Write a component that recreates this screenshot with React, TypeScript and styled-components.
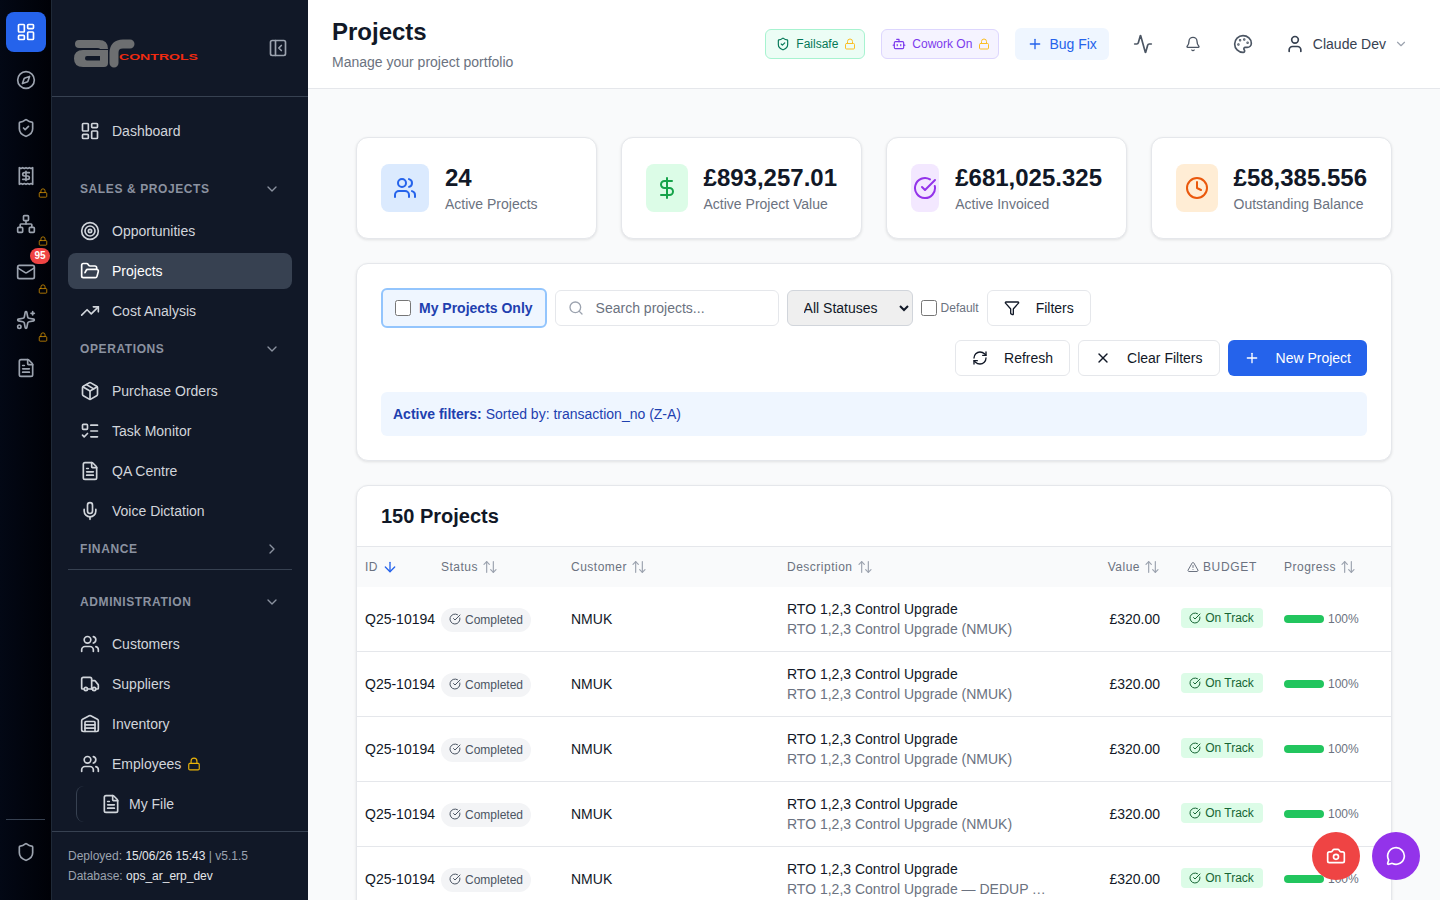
import React from 'react';
import styled, { createGlobalStyle } from 'styled-components';
import {
  Activity,
  ArrowDown,
  ArrowUpDown,
  Bell,
  Bot,
  Camera,
  ChevronDown,
  ChevronRight,
  CircleCheckBig,
  Clock,
  Compass,
  DollarSign,
  FileText,
  Filter,
  FolderOpen,
  LayoutDashboard,
  ListTodo,
  Lock,
  LucideIcon,
  Mail,
  MessageCircle,
  Mic,
  Network,
  Package,
  Palette,
  PanelLeftClose,
  Plus,
  Receipt,
  RefreshCw,
  Search,
  Shield,
  ShieldCheck,
  Sparkles,
  Target,
  TrendingUp,
  TriangleAlert,
  Truck,
  User,
  Users,
  Warehouse,
  X,
} from 'lucide-react';

const GlobalStyle = createGlobalStyle`
  * { box-sizing: border-box; }
  html, body { margin: 0; height: 100%; overflow: hidden; }
  body { font-family: "Liberation Sans", Arial, sans-serif; color: #111827; }
`;

const railItems: { icon: LucideIcon; locked?: boolean; badge?: string; active?: boolean }[] = [
  { icon: LayoutDashboard, active: true },
  { icon: Compass },
  { icon: ShieldCheck },
  { icon: Receipt, locked: true },
  { icon: Network, locked: true },
  { icon: Mail, locked: true, badge: '95' },
  { icon: Sparkles, locked: true },
  { icon: FileText },
];

const stats = [
  { icon: Users, value: '24', label: 'Active Projects', bg: '#dbeafe', fg: '#2563eb' },
  { icon: DollarSign, value: '£893,257.01', label: 'Active Project Value', bg: '#dcfce7', fg: '#16a34a' },
  { icon: CircleCheckBig, value: '£681,025.325', label: 'Active Invoiced', bg: '#f3e8ff', fg: '#9333ea' },
  { icon: Clock, value: '£58,385.556', label: 'Outstanding Balance', bg: '#ffedd5', fg: '#ea580c' },
];

const projectRows = [
  'RTO 1,2,3 Control Upgrade (NMUK)',
  'RTO 1,2,3 Control Upgrade (NMUK)',
  'RTO 1,2,3 Control Upgrade (NMUK)',
  'RTO 1,2,3 Control Upgrade (NMUK)',
  'RTO 1,2,3 Control Upgrade — DEDUP TEST PROJECT',
];

const Logo = () => (
  <LogoSvg viewBox="0 -12 126 40" width={126} height={40}>
    <g fill="#6d6f71">
      <path d="M5 0 H25 Q34 0 34 9 H26 Q26 8 23 8 H5 Q1 8 1 4 Q1 0 5 0 Z" />
      <path
        fillRule="evenodd"
        d="M34 10 H9 Q0 10 0 18.5 Q0 27 9 27 H30 Q34 27 34 23 Z M26 16 H13 Q11 16 11 18.2 Q11 20.5 13 20.5 H26 Z"
      />
    </g>
    <path d="M40 23 V13 Q40 4 49 4 H56" fill="none" stroke="#6d6f71" strokeWidth={9} strokeLinecap="round" />
    <LogoText x={45} y={20} textLength={79} lengthAdjust="spacingAndGlyphs">
      CONTROLS
    </LogoText>
  </LogoSvg>
);

const NavLink = ({ icon: Icon, label, active, locked }: { icon: LucideIcon; label: string; active?: boolean; locked?: boolean }) => (
  <NavItem $active={active}>
    <Icon size={20} />
    <span>{label}</span>
    {locked && <Lock size={14} color="#eab308" />}
  </NavItem>
);

const SortHead = ({ label }: { label: string }) => (
  <HeadInner>
    {label}
    <ArrowUpDown size={16} color="#9ca3af" strokeWidth={1.75} />
  </HeadInner>
);

const App = () => {
  return (
    <>
      <GlobalStyle />
      <Shell>
        <Rail>
          {railItems.map(({ icon: Icon, locked, badge, active }, index) => (
            <RailButton key={index} $active={active}>
              <Icon size={20} />
              {badge && <RailBadge>{badge}</RailBadge>}
              {locked && (
                <RailLock>
                  <Lock size={10} />
                </RailLock>
              )}
            </RailButton>
          ))}
          <RailBottom>
            <RailButton>
              <Shield size={20} />
            </RailButton>
          </RailBottom>
        </Rail>

        <Sidebar>
          <SidebarTop>
            <Logo />
            <PanelLeftClose size={20} color="#9ca3af" />
          </SidebarTop>
          <Nav>
            <NavLink icon={LayoutDashboard} label="Dashboard" />
            <SectionHead $top={28}>
              SALES &amp; PROJECTS
              <ChevronDown size={16} />
            </SectionHead>
            <NavGroup>
              <NavLink icon={Target} label="Opportunities" />
              <NavLink icon={FolderOpen} label="Projects" active />
              <NavLink icon={TrendingUp} label="Cost Analysis" />
            </NavGroup>
            <SectionHead $top={8}>
              OPERATIONS
              <ChevronDown size={16} />
            </SectionHead>
            <NavGroup>
              <NavLink icon={Package} label="Purchase Orders" />
              <NavLink icon={ListTodo} label="Task Monitor" />
              <NavLink icon={FileText} label="QA Centre" />
              <NavLink icon={Mic} label="Voice Dictation" />
            </NavGroup>
            <SectionHead $top={8}>
              FINANCE
              <ChevronRight size={16} />
            </SectionHead>
            <NavDivider />
            <SectionHead $top={0}>
              ADMINISTRATION
              <ChevronDown size={16} />
            </SectionHead>
            <NavGroup>
              <NavLink icon={Users} label="Customers" />
              <NavLink icon={Truck} label="Suppliers" />
              <NavLink icon={Warehouse} label="Inventory" />
              <NavLink icon={Users} label="Employees" locked />
              <SubItem>
                <FileText size={20} />
                My File
              </SubItem>
            </NavGroup>
          </Nav>
          <SidebarFooter>
            <div>
              Deployed: <FooterValue>15/06/26 15:43</FooterValue> | v5.1.5
            </div>
            <div>
              Database: <FooterValue>ops_ar_erp_dev</FooterValue>
            </div>
          </SidebarFooter>
        </Sidebar>

        <Main>
          <Header>
            <div>
              <PageTitle>Projects</PageTitle>
              <PageSub>Manage your project portfolio</PageSub>
            </div>
            <HeaderActions>
              <Chip $bg="#ecfdf5" $border="#a7f3d0" $color="#047857">
                <ShieldCheck size={14} />
                Failsafe
                <Lock size={12} color="#fbbf24" />
              </Chip>
              <Chip $bg="#f5f3ff" $border="#ddd6fe" $color="#7c3aed">
                <Bot size={14} />
                Cowork On
                <Lock size={12} color="#fbbf24" />
              </Chip>
              <BugButton>
                <Plus size={16} />
                Bug Fix
              </BugButton>
              <IconGroup>
                <IconButton>
                  <Activity size={20} />
                </IconButton>
                <IconButton>
                  <Bell size={16} />
                </IconButton>
                <IconButton>
                  <Palette size={20} />
                </IconButton>
              </IconGroup>
              <UserButton>
                <User size={20} />
                Claude Dev
                <ChevronDown size={14} color="#9ca3af" />
              </UserButton>
            </HeaderActions>
          </Header>

          <Content>
            <StatGrid>
              {stats.map(({ icon: Icon, value, label, bg, fg }) => (
                <StatCard key={label}>
                  <StatIcon $bg={bg} $fg={fg}>
                    <Icon size={24} />
                  </StatIcon>
                  <StatText>
                    <StatValue>{value}</StatValue>
                    <StatLabel>{label}</StatLabel>
                  </StatText>
                </StatCard>
              ))}
            </StatGrid>

            <Panel>
              <FilterPanelBody>
                <FilterRows>
                  <FilterLeft>
                    <MineToggle>
                      <CheckBox type="checkbox" />
                      My Projects Only
                    </MineToggle>
                    <SearchBox>
                      <Search size={16} color="#9ca3af" />
                      <SearchInput placeholder="Search projects..." />
                    </SearchBox>
                    <StatusSelect>
                      <option>All Statuses</option>
                    </StatusSelect>
                    <DefaultLabel>
                      <CheckBox type="checkbox" />
                      Default
                    </DefaultLabel>
                    <ToolButton>
                      <Filter size={16} />
                      Filters
                    </ToolButton>
                  </FilterLeft>
                  <FilterRight>
                    <ToolButton>
                      <RefreshCw size={16} />
                      Refresh
                    </ToolButton>
                    <ToolButton>
                      <X size={16} />
                      Clear Filters
                    </ToolButton>
                    <ToolButton $primary>
                      <Plus size={16} />
                      New Project
                    </ToolButton>
                  </FilterRight>
                </FilterRows>
                <ActiveFilters>
                  <strong>Active filters:</strong> Sorted by: transaction_no (Z-A)
                </ActiveFilters>
              </FilterPanelBody>
            </Panel>

            <Panel>
              <TableTitle>150 Projects</TableTitle>
              <Table>
                <thead>
                  <tr>
                    <Th $w={76}>
                      <HeadInner>
                        ID
                        <ArrowDown size={16} color="#2563eb" />
                      </HeadInner>
                    </Th>
                    <Th $w={130}>
                      <SortHead label="Status" />
                    </Th>
                    <Th $w={216}>
                      <SortHead label="Customer" />
                    </Th>
                    <Th $w={320}>
                      <SortHead label="Description" />
                    </Th>
                    <Th $w={69}>
                      <HeadInner $end>
                        Value
                        <ArrowUpDown size={16} color="#9ca3af" strokeWidth={1.75} />
                      </HeadInner>
                    </Th>
                    <Th $w={108}>
                      <BudgetHead>
                        <TriangleAlert size={12} />
                        BUDGET
                      </BudgetHead>
                    </Th>
                    <Th $w={115}>
                      <SortHead label="Progress" />
                    </Th>
                  </tr>
                </thead>
                <tbody>
                  {projectRows.map((description, index) => (
                    <Row key={index}>
                      <Td $nowrap>Q25-10194</Td>
                      <Td>
                        <StatusPill>
                          <PillIcon>
                            <CircleCheckBig size={12} />
                          </PillIcon>
                          Completed
                        </StatusPill>
                      </Td>
                      <Td>NMUK</Td>
                      <Td>
                        <DescTitle>RTO 1,2,3 Control Upgrade</DescTitle>
                        <DescSub>{description}</DescSub>
                      </Td>
                      <ValueCell>£320.00</ValueCell>
                      <Td>
                        <TrackBadge>
                          <CircleCheckBig size={12} />
                          On Track
                        </TrackBadge>
                      </Td>
                      <Td>
                        <ProgressWrap>
                          <ProgressTrack>
                            <ProgressFill style={{ width: '100%' }} />
                          </ProgressTrack>
                          <ProgressText>100%</ProgressText>
                        </ProgressWrap>
                      </Td>
                    </Row>
                  ))}
                </tbody>
              </Table>
            </Panel>
          </Content>
        </Main>
      </Shell>
      <Fab $bg="#ef4444" $right={80}>
        <Camera size={20} />
      </Fab>
      <Fab $bg="#9333ea" $right={20}>
        <MessageCircle size={20} />
      </Fab>
    </>
  );
};

export default App;

const Shell = styled.div`
  display: flex;
  width: 100%;
  height: 100vh;
  overflow: hidden;
`;

const Rail = styled.aside`
  flex: none;
  width: 52px;
  padding: 12px 6px 0;
  display: flex;
  flex-direction: column;
  gap: 8px;
  background: linear-gradient(90deg, #030815, #000107);
  border-right: 1px solid #1f2937;
`;

const RailButton = styled.div<{ $active?: boolean }>`
  position: relative;
  flex: none;
  width: 40px;
  height: 40px;
  display: flex;
  align-items: center;
  justify-content: center;
  border-radius: 8px;
  color: ${({ $active }) => ($active ? '#ffffff' : '#9ca3af')};
  background: ${({ $active }) => ($active ? '#2563eb' : 'transparent')};
`;

const RailLock = styled.span`
  position: absolute;
  left: 32px;
  top: 32px;
  display: flex;
  color: #ca8a04;
`;

const RailBadge = styled.span`
  position: absolute;
  left: 24px;
  top: -4px;
  min-width: 20px;
  height: 16px;
  border-radius: 8px;
  background: #ef4444;
  color: #ffffff;
  font-size: 10px;
  font-weight: 700;
  line-height: 16px;
  text-align: center;
`;

const RailBottom = styled.div`
  margin-top: auto;
  padding: 12px 0 28px;
  border-top: 1px solid #374151;
`;

const Sidebar = styled.aside`
  flex: none;
  width: 256px;
  display: flex;
  flex-direction: column;
  background: #111827;
  color: #d1d5db;
`;

const SidebarTop = styled.div`
  flex: none;
  height: 97px;
  padding: 0 20px 0 22px;
  display: flex;
  align-items: center;
  justify-content: space-between;
  border-bottom: 1px solid #374151;
`;

const LogoSvg = styled.svg`
  display: block;
`;

const LogoText = styled.text`
  font-family: "Liberation Sans", Arial, sans-serif;
  font-size: 9.5px;
  font-weight: 700;
  fill: #f02a10;
`;

const Nav = styled.nav`
  flex: 1;
  min-height: 0;
  padding: 16px 16px 0;
  overflow: hidden;
`;

const NavGroup = styled.div`
  display: flex;
  flex-direction: column;
  gap: 4px;
  margin-top: 12px;
`;

const NavItem = styled.div<{ $active?: boolean }>`
  height: 36px;
  padding: 0 12px;
  display: flex;
  align-items: center;
  gap: 12px;
  border-radius: 8px;
  font-size: 14px;
  color: ${({ $active }) => ($active ? '#ffffff' : '#d1d5db')};
  background: ${({ $active }) => ($active ? '#374151' : 'transparent')};

  svg:last-child:not(:first-child) {
    margin-left: -6px;
  }
`;

const SubItem = styled.div`
  height: 36px;
  margin-left: 8px;
  padding-left: 24px;
  display: flex;
  align-items: center;
  gap: 8px;
  font-size: 14px;
  color: #d1d5db;
  border-left: 1px solid #374151;
  border-radius: 8px 0 0 8px;
`;

const SectionHead = styled.div<{ $top: number }>`
  height: 24px;
  margin-top: ${({ $top }) => $top}px;
  padding: 0 12px;
  display: flex;
  align-items: center;
  justify-content: space-between;
  font-size: 12px;
  font-weight: 700;
  letter-spacing: 0.6px;
  color: #8b92a0;
`;

const NavDivider = styled.div`
  height: 1px;
  margin: 8px 0 20px;
  background: #374151;
`;

const SidebarFooter = styled.div`
  flex: none;
  height: 69px;
  padding: 14px 16px 0;
  border-top: 1px solid #374151;
  font-size: 12px;
  line-height: 20px;
  color: #9ca3af;
`;

const FooterValue = styled.span`
  color: #e5e7eb;
`;

const Main = styled.main`
  flex: 1;
  min-width: 0;
  background: #f9fafb;
  overflow: hidden;
`;

const Header = styled.header`
  height: 89px;
  padding: 0 24px;
  display: flex;
  align-items: center;
  justify-content: space-between;
  background: #ffffff;
  border-bottom: 1px solid #e5e7eb;
`;

const PageTitle = styled.h1`
  margin: 0 0 4px;
  font-size: 24px;
  line-height: 32px;
  font-weight: 700;
  color: #111827;
`;

const PageSub = styled.p`
  margin: 0;
  font-size: 14px;
  line-height: 20px;
  color: #6b7280;
`;

const HeaderActions = styled.div`
  display: flex;
  align-items: center;
  gap: 16px;
`;

const Chip = styled.div<{ $bg: string; $border: string; $color: string }>`
  height: 30px;
  padding: 0 8px 0 10px;
  display: flex;
  align-items: center;
  gap: 6px;
  border-radius: 6px;
  border: 1px solid ${({ $border }) => $border};
  background: ${({ $bg }) => $bg};
  color: ${({ $color }) => $color};
  font-size: 12px;
`;

const BugButton = styled.button`
  height: 32px;
  padding: 0 12px;
  display: flex;
  align-items: center;
  gap: 6px;
  border: 0;
  border-radius: 6px;
  background: #eff6ff;
  color: #2563eb;
  font: inherit;
  font-size: 14px;
`;

const IconGroup = styled.div`
  margin-left: -2px;
  display: flex;
  gap: 10px;
`;

const IconButton = styled.div`
  width: 40px;
  height: 40px;
  display: flex;
  align-items: center;
  justify-content: center;
  color: #4b5563;
`;

const UserButton = styled.div`
  margin-left: -2px;
  padding: 8px;
  display: flex;
  align-items: center;
  gap: 8px;
  font-size: 14px;
  color: #374151;
`;

const Content = styled.div`
  padding: 48px;
  display: flex;
  flex-direction: column;
  gap: 24px;
`;

const StatGrid = styled.div`
  display: grid;
  grid-template-columns: repeat(4, 1fr);
  gap: 24px;
`;

const StatCard = styled.div`
  min-width: 0;
  padding: 24px;
  display: flex;
  align-items: center;
  gap: 16px;
  background: #ffffff;
  border: 1px solid #e5e7eb;
  border-radius: 12px;
  box-shadow: 0 1px 3px rgba(0, 0, 0, 0.1);
`;

const StatIcon = styled.div<{ $bg: string; $fg: string }>`
  flex: 0 1 48px;
  min-width: 0;
  height: 48px;
  display: flex;
  align-items: center;
  justify-content: center;
  border-radius: 8px;
  background: ${({ $bg }) => $bg};
  color: ${({ $fg }) => $fg};
`;

const StatText = styled.div`
  flex: none;
  white-space: nowrap;
`;

const StatValue = styled.div`
  font-size: 24px;
  line-height: 32px;
  font-weight: 700;
  color: #111827;
`;

const StatLabel = styled.div`
  font-size: 14px;
  line-height: 20px;
  color: #6b7280;
`;

const Panel = styled.section`
  background: #ffffff;
  border: 1px solid #e5e7eb;
  border-radius: 12px;
  box-shadow: 0 1px 3px rgba(0, 0, 0, 0.1);
  overflow: hidden;
`;

const FilterPanelBody = styled.div`
  padding: 24px;
`;

const FilterRows = styled.div`
  display: flex;
  flex-wrap: wrap;
  justify-content: space-between;
  gap: 12px;
`;

const FilterLeft = styled.div`
  display: flex;
  align-items: center;
  gap: 8px;
`;

const FilterRight = styled.div`
  margin-left: auto;
  display: flex;
  align-items: center;
  gap: 8px;
`;

const MineToggle = styled.label`
  height: 40px;
  padding: 0 12px;
  display: flex;
  align-items: center;
  gap: 8px;
  border: 2px solid #93c5fd;
  border-radius: 6px;
  background: #eff6ff;
  color: #1e40af;
  font-size: 14px;
  font-weight: 700;
  white-space: nowrap;
`;

const CheckBox = styled.input`
  flex: none;
  width: 16px;
  height: 16px;
  margin: 0;
`;

const SearchBox = styled.div`
  width: 224px;
  height: 36px;
  padding: 0 12px;
  display: flex;
  align-items: center;
  gap: 12px;
  border: 1px solid #e5e7eb;
  border-radius: 6px;
  background: #ffffff;
`;

const SearchInput = styled.input`
  flex: 1;
  min-width: 0;
  border: 0;
  outline: 0;
  padding: 0;
  font: inherit;
  font-size: 14px;

  &::placeholder {
    color: #6b7280;
  }
`;

const StatusSelect = styled.select`
  width: 126px;
  height: 36px;
  padding: 0 8px 0 12px;
  border: 1px solid #d1d5db;
  border-radius: 6px;
  background-color: #efefef;
  color: #111827;
  font: inherit;
  font-size: 14px;
`;

const DefaultLabel = styled.label`
  display: flex;
  align-items: center;
  gap: 4px;
  font-size: 12px;
  color: #6b7280;
`;

const ToolButton = styled.button<{ $primary?: boolean }>`
  height: 36px;
  padding: 0 16px;
  display: flex;
  align-items: center;
  gap: 16px;
  border: ${({ $primary }) => ($primary ? '0' : '1px solid #e5e7eb')};
  border-radius: 6px;
  background: ${({ $primary }) => ($primary ? '#2563eb' : '#ffffff')};
  color: ${({ $primary }) => ($primary ? '#ffffff' : '#111827')};
  font: inherit;
  font-size: 14px;
  white-space: nowrap;
`;

const ActiveFilters = styled.div`
  margin-top: 16px;
  height: 44px;
  padding: 0 12px;
  display: flex;
  align-items: center;
  gap: 4px;
  border-radius: 6px;
  background: #eff6ff;
  color: #1e40af;
  font-size: 14px;
`;

const TableTitle = styled.h2`
  margin: 0;
  height: 61px;
  padding: 16px 24px;
  font-size: 20px;
  line-height: 28px;
  font-weight: 700;
  color: #111827;
  border-bottom: 1px solid #e5e7eb;
`;

const Table = styled.table`
  width: 100%;
  table-layout: fixed;
  border-collapse: separate;
  border-spacing: 0;
`;

const Th = styled.th<{ $w: number }>`
  width: ${({ $w }) => $w}px;
  height: 40px;
  padding: 0 8px;
  background: #f9fafb;
  font-size: 12px;
  font-weight: 400;
  letter-spacing: 0.5px;
  color: #6b7280;
  text-align: left;
`;

const HeadInner = styled.div<{ $end?: boolean }>`
  display: flex;
  align-items: center;
  justify-content: ${({ $end }) => ($end ? 'flex-end' : 'flex-start')};
  gap: 4px;
  white-space: nowrap;
`;

const BudgetHead = styled.div`
  display: flex;
  align-items: center;
  justify-content: center;
  gap: 4px;
  letter-spacing: 0.7px;
`;

const Row = styled.tr`
  height: 65px;
`;

const Td = styled.td<{ $nowrap?: boolean }>`
  padding: 0 8px;
  font-size: 14px;
  line-height: 20px;
  color: #111827;
  border-bottom: 1px solid #e5e7eb;
  white-space: ${({ $nowrap }) => ($nowrap ? 'nowrap' : 'normal')};
`;

const ValueCell = styled(Td)`
  text-align: right;
`;

const StatusPill = styled.span`
  display: flex;
  align-items: center;
  width: fit-content;
  height: 24px;
  margin-top: 2px;
  padding: 0 8px;
  gap: 4px;
  border-radius: 12px;
  background: #f3f4f6;
  color: #4b5563;
  font-size: 12px;
  white-space: nowrap;
`;

const PillIcon = styled.span`
  display: flex;
  margin-top: -3px;
`;

const DescTitle = styled.div`
  color: #111827;
`;

const DescSub = styled.div`
  max-width: 260px;
  color: #6b7280;
  white-space: nowrap;
  overflow: hidden;
  text-overflow: ellipsis;
`;

const TrackBadge = styled.span`
  display: flex;
  align-items: center;
  width: fit-content;
  height: 20px;
  margin: -2px auto 0;
  padding: 0 9px 0 8px;
  gap: 4px;
  border-radius: 4px;
  background: #dcfce7;
  color: #166534;
  font-size: 12px;
  white-space: nowrap;
`;

const ProgressWrap = styled.div`
  display: flex;
  align-items: center;
  gap: 4px;
`;

const ProgressTrack = styled.div`
  width: 40px;
  height: 8px;
  border-radius: 4px;
  background: #e5e7eb;
  overflow: hidden;
`;

const ProgressFill = styled.div`
  height: 100%;
  background: #22c55e;
`;

const ProgressText = styled.span`
  font-size: 12px;
  color: #6b7280;
`;

const Fab = styled.button<{ $bg: string; $right: number }>`
  position: fixed;
  right: ${({ $right }) => $right}px;
  bottom: 20px;
  width: 48px;
  height: 48px;
  display: flex;
  align-items: center;
  justify-content: center;
  border: 0;
  border-radius: 50%;
  background: ${({ $bg }) => $bg};
  color: #ffffff;
`;
